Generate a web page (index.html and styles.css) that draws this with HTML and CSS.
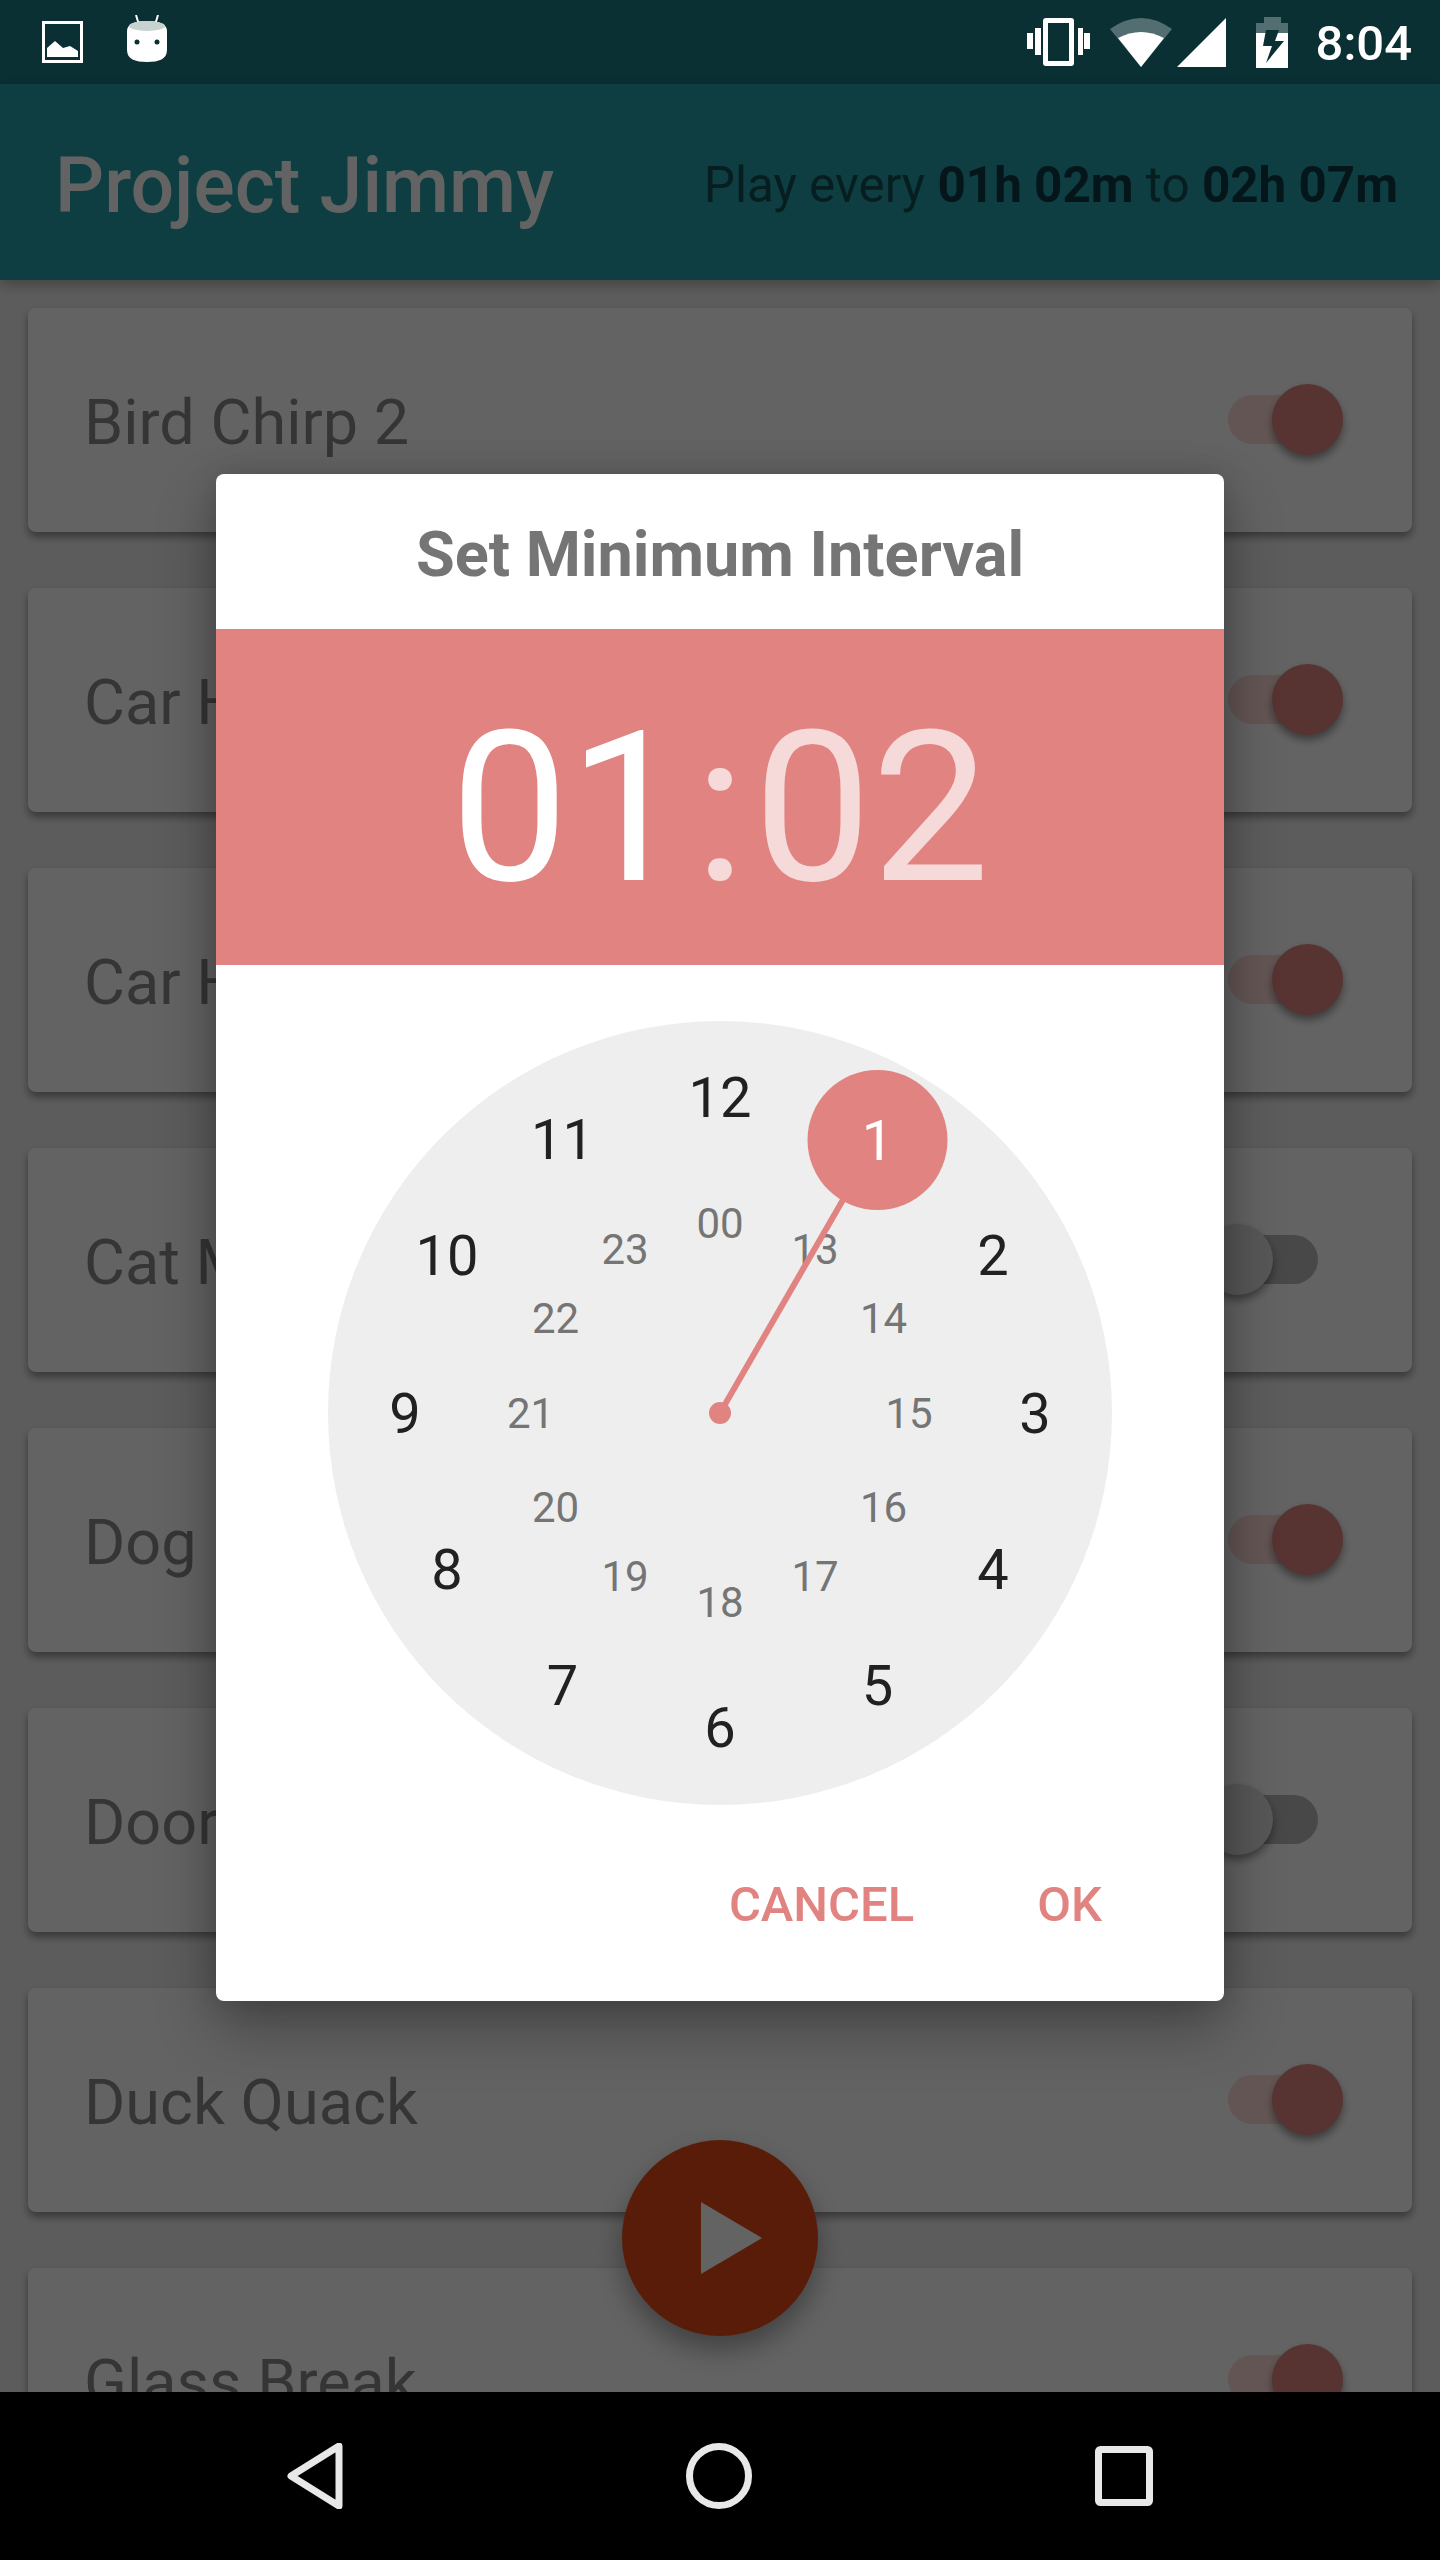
FILE: index.html
```html
<!DOCTYPE html>
<html lang="en">
<head>
    <meta charset="UTF-8">
    <title>Project Jimmy</title>
    <link rel="stylesheet" href="styles.css">
</head>
<body>
    <div id="phone">
        <div class="screen">
            <div class="status-space"></div>
            <header class="appbar">
                <h1>Project Jimmy</h1>
                <p>Play every <b>01h 02m</b> to <b>02h 07m</b></p>
            </header>
            <ul class="sounds">
                <li class="sound"><span>Bird Chirp 2</span><i class="switch on"></i></li>
                <li class="sound"><span>Car Horn</span><i class="switch on"></i></li>
                <li class="sound"><span>Car Honk</span><i class="switch on"></i></li>
                <li class="sound"><span>Cat Meow</span><i class="switch"></i></li>
                <li class="sound"><span>Dog Bark</span><i class="switch on"></i></li>
                <li class="sound"><span>Door Bell</span><i class="switch"></i></li>
                <li class="sound"><span>Duck Quack</span><i class="switch on"></i></li>
                <li class="sound"><span>Glass Break</span><i class="switch on"></i></li>
            </ul>
            <button class="fab">
                <svg width="196" height="196" viewBox="0 0 196 196"><polygon points="79,62 140,98 79,134" fill="#fff"/></svg>
            </button>
        </div>

        <div class="scrim"></div>

        <div class="statusbar">
            <div class="status-left">
                <svg width="41" height="42" viewBox="0 0 41 42"><path d="M1.500 1.500h38v39h-38z" fill="none" stroke="#fff" stroke-width="3"/><path d="M5 36V27L13 20L21 27L28 25L36 30V36z" fill="#fff"/></svg>
                <svg class="mallow" width="40" height="47" viewBox="0 0 40 47"><path d="M9 0l3 10M31 0l-3 10" stroke="#fff" stroke-width="2" fill="none"/><path d="M0 16C0 9 8 6 20 6S40 9 40 16V35C40 44 32 47 20 47S0 44 0 35z" fill="#fff"/><ellipse cx="20" cy="11" rx="18" ry="5" fill="#c8d2d0"/><circle cx="10" cy="27" r="2.500" fill="#0a3032"/><circle cx="30" cy="27" r="2.500" fill="#0a3032"/></svg>
            </div>
            <div class="status-right">
                <svg class="vibrate" width="63" height="48" viewBox="0 0 63 48"><path d="M19 0h25a3 3 0 0 1 3 3v42a3 3 0 0 1-3 3H19a3 3 0 0 1-3-3V3a3 3 0 0 1 3-3zm2 5v38h21V5z" fill="#fff" fill-rule="evenodd"/><path d="M8 10h6v27H8zM51 10h5v27h-5zM0 15h6v16H0zM57 15h6v16h-6z" fill="#fff"/></svg>
                <svg class="wifi" width="62" height="49" viewBox="0 0 62 49"><path d="M0 11Q31-11 62 11L31 49z" fill="#fff" fill-opacity=".3"/><path d="M8 20Q31 8 54 20L31 49z" fill="#fff"/></svg>
                <svg class="signal" width="49" height="49" viewBox="0 0 49 49"><polygon points="49,0 49,49 0,49" fill="#fff"/></svg>
                <svg class="battery" width="32" height="51" viewBox="0 0 32 51"><path d="M8 0h17v6h7v45H0V6h8z" fill="#fff" fill-opacity=".3"/><path d="M0 16h32v35H0z" fill="#fff"/><path d="M10 13H23L19 24H28L10 46L16 29H7z" fill="#0a3032"/></svg>
                <span class="clock-time">8:04</span>
            </div>
        </div>

        <div class="dialog">
            <h2>Set Minimum Interval</h2>
            <div class="time-header">
                <span class="hours">01</span>
                <span class="colon">:</span>
                <span class="minutes">02</span>
            </div>
            <svg class="dial" width="784" height="784" viewBox="0 0 784 784">
                <circle cx="392" cy="392" r="392" fill="#eeeeee"/>
                <g class="outer">
                    <text x="392" y="96">12</text>
                    <text x="234.500" y="138">11</text>
                    <text x="119" y="254">10</text>
                    <text x="77" y="412">9</text>
                    <text x="119" y="568">8</text>
                    <text x="234.500" y="684">7</text>
                    <text x="392" y="726">6</text>
                    <text x="549.500" y="684">5</text>
                    <text x="665" y="568">4</text>
                    <text x="707" y="412">3</text>
                    <text x="665" y="254">2</text>
                </g>
                <g class="inner">
                    <text x="392" y="217">00</text>
                    <text x="297" y="243">23</text>
                    <text x="227.500" y="312">22</text>
                    <text x="202.500" y="407">21</text>
                    <text x="227.500" y="501">20</text>
                    <text x="297" y="570">19</text>
                    <text x="392" y="596">18</text>
                    <text x="487" y="570">17</text>
                    <text x="555.500" y="501">16</text>
                    <text x="581" y="407">15</text>
                    <text x="555.500" y="312">14</text>
                    <text x="487" y="243">13</text>
                </g>
                <line x1="392" y1="392" x2="549.500" y2="119" stroke="#e08381" stroke-width="6"/>
                <circle cx="392" cy="392" r="11" fill="#e08381"/>
                <circle cx="549.500" cy="119" r="70" fill="#e08381"/>
                <text class="picked" x="549.500" y="139">1</text>
            </svg>
            <div class="actions">
                <button>CANCEL</button>
                <button>OK</button>
            </div>
        </div>

        <nav class="navbar">
            <svg width="56" height="66" viewBox="0 0 56 66"><path d="M52 3v60L4 33z" fill="none" stroke="#e8e8e8" stroke-width="7" stroke-linejoin="round"/></svg>
            <svg width="66" height="66" viewBox="0 0 66 66"><circle cx="33" cy="33" r="29.500" fill="none" stroke="#e8e8e8" stroke-width="7"/></svg>
            <svg width="58" height="60" viewBox="0 0 58 60"><rect x="3.500" y="3.500" width="51" height="53" rx="2" fill="none" stroke="#e8e8e8" stroke-width="7"/></svg>
        </nav>
    </div>
</body>
</html>
```

FILE: styles.css
```css
* {
    box-sizing: border-box;
}
body {
    margin: 0;
    font-family: Roboto, sans-serif;
}
#phone {
    position: relative;
    width: 1440px;
    height: 2560px;
    overflow: hidden;
    background-color: #eeeeee;
}
.screen {
    height: 2392px;
    overflow: hidden;
    position: relative;
}
.status-space {
    height: 84px;
    background-color: #1a7d87;
}
.appbar {
    height: 196px;
    background-color: #249ea9;
    display: flex;
    justify-content: space-between;
    align-items: center;
    padding: 0 42px 0 55px;
    box-shadow: 0 4px 14px rgba(0, 0, 0, 0.3);
    position: relative;
}
.appbar h1 {
    margin: 0;
    padding-top: 7px;
    font-size: 77px;
    font-weight: 500;
    color: white;
}
.appbar p {
    margin: 0;
    padding-top: 5px;
    font-size: 49.400px;
    color: #144f56;
}
.appbar b {
    font-weight: 700;
    color: #0c3a40;
}
.sounds {
    list-style-type: none;
    margin: 0;
    padding: 28px 28px 0;
    display: flex;
    flex-direction: column;
    gap: 56px;
}
.sound {
    height: 224px;
    flex-shrink: 0;
    background-color: white;
    border-radius: 8px;
    box-shadow: 0 5px 8px rgba(0, 0, 0, 0.4);
    display: flex;
    justify-content: space-between;
    align-items: center;
    padding: 0 94px 0 56px;
    font-size: 63px;
    color: #8a8a8a;
}
.sound span {
    padding-top: 4px;
}
.switch {
    display: block;
    width: 90px;
    height: 49px;
    border-radius: 25px;
    background-color: #ffdcd9;
    position: relative;
    margin-top: -2px;
}
.switch::after {
    content: "";
    position: absolute;
    left: -26px;
    top: -11px;
    width: 71px;
    height: 71px;
    border-radius: 50%;
    background-color: #e0e0e0;
    box-shadow: 0 5px 8px rgba(0, 0, 0, 0.4);
}
.switch:not(.on) {
    background-color: rgba(0, 0, 0, 0.27);
}
.switch.on::after {
    left: auto;
    right: -25px;
    background-color: #e08381;
}
.fab {
    position: absolute;
    left: 622px;
    top: 2140px;
    width: 196px;
    height: 196px;
    border: none;
    border-radius: 50%;
    padding: 0;
    background-color: #e64a19;
    box-shadow: 0 14px 28px rgba(0, 0, 0, 0.35);
}
.fab svg {
    display: block;
}
.scrim {
    position: absolute;
    inset: 0;
    background-color: rgba(0, 0, 0, 0.61);
}
.statusbar {
    position: absolute;
    left: 0;
    top: 0;
    width: 100%;
    height: 84px;
    display: flex;
    justify-content: space-between;
    align-items: center;
    padding: 0 28px 0 42px;
}
.status-left,
.status-right {
    display: flex;
    align-items: center;
}
.status-left {
    gap: 44px;
}
.status-left .mallow {
    margin-bottom: 7px;
}
.wifi {
    margin-left: 20px;
}
.signal {
    margin-left: 5px;
}
.battery {
    margin-left: 30px;
}
.clock-time {
    font-size: 49px;
    font-weight: 500;
    color: white;
    margin-left: 28px;
    padding-top: 2px;
}
.dialog {
    position: absolute;
    left: 216px;
    top: 474px;
    width: 1008px;
    height: 1527px;
    background-color: white;
    border-radius: 8px;
    box-shadow: 0 28px 60px rgba(0, 0, 0, 0.3), 0 0 30px rgba(0, 0, 0, 0.15);
    display: flex;
    flex-direction: column;
    align-items: center;
}
.dialog h2 {
    margin: 0;
    height: 155px;
    line-height: 161px;
    font-size: 63px;
    font-weight: 700;
    color: #757575;
}
.time-header {
    width: 100%;
    height: 336px;
    padding-top: 22px;
    background-color: #e08381;
    display: grid;
    grid-template-columns: 1fr auto 1fr;
    align-items: center;
    font-size: 210px;
    line-height: 1;
    color: white;
}
.hours {
    text-align: right;
}
.colon {
    padding: 0 8px;
    color: rgba(255, 255, 255, 0.7);
}
.minutes {
    color: rgba(255, 255, 255, 0.7);
}
.dial {
    display: block;
    margin-top: 56px;
}
.dial text {
    text-anchor: middle;
}
.outer text {
    font-size: 56px;
    fill: #212121;
}
.inner text {
    font-size: 42px;
    fill: #757575;
}
.dial .picked {
    font-size: 56px;
    fill: white;
}
.actions {
    align-self: flex-end;
    display: flex;
    gap: 123px;
    padding: 71px 122px 0 0;
}
.actions button {
    border: none;
    padding: 0;
    background: none;
    font-family: Roboto, sans-serif;
    font-size: 49px;
    font-weight: 500;
    color: #e08381;
}
.navbar {
    position: absolute;
    left: 0;
    top: 2392px;
    width: 100%;
    height: 168px;
    background-color: black;
    display: flex;
    justify-content: center;
    align-items: center;
    gap: 343px;
}
```
